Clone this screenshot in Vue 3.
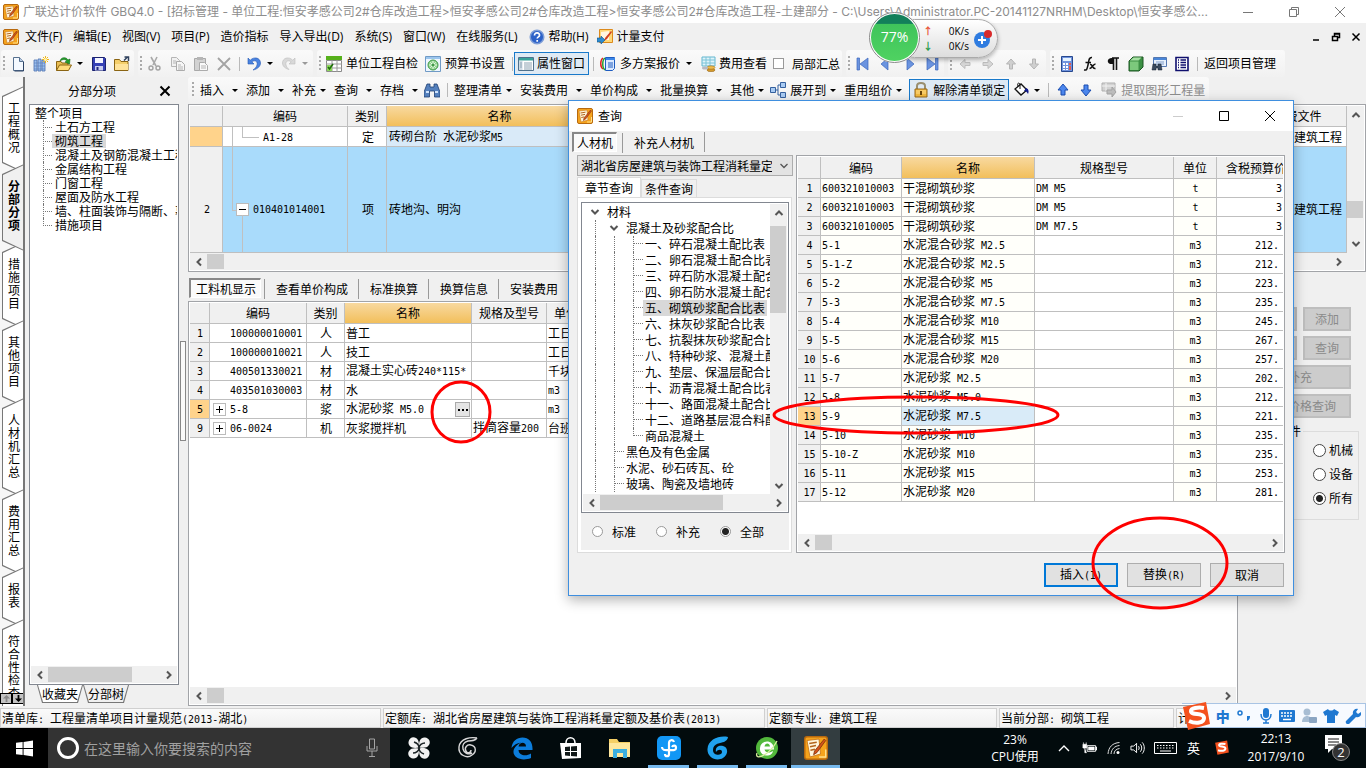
<script setup>
import { h, ref } from 'vue'

const icons = {
  app: '<rect x=".5" y=".5" width="15" height="15" rx="1.500" fill="#f5a31c" stroke="#b8690e"/><path d="M2 3l8-1 1 10-7 2z" fill="#fff6dc" stroke="#c9781c" stroke-width=".6"/><path d="M3.500 5l5-.8M4 7.200l4-.8M4.300 9.500l3-.6" stroke="#b3651c" stroke-width="1"/><path d="M13.500 2L7 10l-.6 2.500L8.700 11l5.800-8z" fill="#d2541a" stroke="#7a2c0a" stroke-width=".5"/><path d="M10 14h4.500V9" stroke="#ffe08a" fill="none"/>',
  newfile: '<path d="M3.500 1.500h6l4 4v9h-10z" fill="#f4f9ff" stroke="#56708f"/><path d="M9.500 1.500v4h4" fill="#b9cce4" stroke="#56708f"/><path d="M13.500 6v9h-9" stroke="#2c4364" fill="none"/>',
  newbook: '<path d="M1 4h3v11H1zM5 3h3v12H5zM9 4h3v11H9z" fill="#9dc0ee" stroke="#4a6fae" stroke-width=".8"/><path d="M1 7h11M1 10h11M1 13h11" stroke="#5d83bd" stroke-width=".7"/><path d="M12.500 0v7M9 3.500h7M10 1l5 5M15 1l-5 5" stroke="#f1b619"/><circle cx="12.500" cy="3.500" r="1.500" fill="#fff3b0"/>',
  open: '<path d="M.5 14.500V5.500H5l1 1.500h6v2" fill="#e9bd52" stroke="#8a6413"/><path d="M.5 14.500L3.500 9h12l-3 5.500z" fill="#ffdb7a" stroke="#8a6413"/><path d="M4 5c1-4 6-4.500 8-1l2-1-.5 5L9 6l1.800-1C9.500 3 7 3 4 5z" fill="#23a129" stroke="#0d6615" stroke-width=".6"/>',
  save: '<path d="M1.500 1.500h12l1 1v12h-13z" fill="#3540b5" stroke="#1b226e"/><path d="M4 2h8v5H4z" fill="#f4f5ff"/><path d="M4 10h8v4.500H4z" fill="#c8cdf0"/><path d="M5.500 11h2v3h-2z" fill="#20277c"/>',
  folder: '<path d="M.5 14.500V3.500h5l1.500 2h7v9z" fill="#f5cf6b" stroke="#8a6413"/><path d="M1 14V8h13v6z" fill="#ffe39a"/><path d="M10 4.500l3.500-3.500M10.500 1h4v4" stroke="#30425e" stroke-width="1.500" fill="none"/>',
  cut: '<path d="M4 1l5 9M10 1L6 9" stroke="#a9a9a9" stroke-width="1.600" fill="none"/><circle cx="4" cy="12" r="2" fill="none" stroke="#a3a3a3" stroke-width="1.400"/><circle cx="11" cy="12" r="2" fill="none" stroke="#a3a3a3" stroke-width="1.400"/>',
  copy: '<path d="M1.500 1.500h5l3 3v6h-8z" fill="#f1f1f1" stroke="#b5b5b5"/><path d="M6.500 5.500h5l3 3v6h-8z" fill="#f6f6f6" stroke="#ababab"/><path d="M8 9h3M8 11h5M8 13h5M3 5h3M3 7h3" stroke="#b5b5b5"/>',
  paste: '<path d="M1.500 2.500h11v12h-11z" fill="#d2d2d2" stroke="#a9a9a9"/><path d="M4 1h6v3H4z" fill="#b5b5b5"/><path d="M6.500 6.500h5l3 3v5h-8z" fill="#fafafa" stroke="#ababab"/><path d="M8 10h5M8 12h5" stroke="#b5b5b5"/>',
  del: '<path d="M2 2l12 12M14 2L2 14" stroke="#a3a3a3" stroke-width="1.800"/>',
  undo: '<path d="M2 2v6h6L5.800 5.800C9 3.500 12 5.500 11 9c-.5 2-2 3.500-4 5 5-1 7.500-4 7.500-7C14.500 2 8.500 0 4.200 4.200z" fill="#4a83e0" stroke="#2457b3" stroke-width=".6"/>',
  redo: '<path d="M14 2v6H8l2.200-2.200C7 3.500 4 5.500 5 9c.5 2 1.500 3 3 4.500C4 12.500 1.500 10 1.500 7 1.500 2 7.500 0 11.800 4.200z" fill="#d9d9d9" stroke="#bcbcbc" stroke-width=".6"/>',
  check: '<path d="M0 0h16v4H0z" fill="#57b11c"/><path d="M.5 4.500h15v11H.5z" fill="#fff" stroke="#8b8b8b"/><path d="M0 8h16M0 12h16M6 4v12M11 4v12" stroke="#9a9a9a"/><path d="M1 9h5v6H1z" fill="#8ed85b"/><path d="M2 11l1.500 2L7 8" stroke="#1f6e0c" stroke-width="1.600" fill="none"/>',
  budget: '<path d="M.5.500h15v15H.5z" fill="#eef6ff" stroke="#6f9ac6"/><path d="M1 1h14v2H1z" fill="#9cc6ee"/><circle cx="8" cy="9" r="5" fill="#8fd08d" stroke="#3f9a47"/><path d="M8 5v8M4 9h8M5.300 6.300l5.400 5.400M10.700 6.300l-5.400 5.400" stroke="#eafbe8"/><circle cx="8" cy="9" r="1.500" fill="#3f9a47"/>',
  props: '<path d="M.5 1.500h15v13H.5z" fill="#fff" stroke="#50718c"/><path d="M1 2h14v2.500H1z" fill="#39a29a"/><path d="M1 5h3.500v9H1z" fill="#cfdbe5"/><path d="M6 7h8M6 9h8M6 11h8M6 13h8M2 7h2M2 9h2M2 11h2" stroke="#8ba1b1"/>',
  plans: '<path d="M3 2C0 4 0 11 3 13" stroke="#e02020" stroke-width="1.500" fill="none"/><path d="M5 2C2 4 2 12 5 14" stroke="#27a12c" stroke-width="1.500" fill="none"/><path d="M5.500 1.500h9v11l-2 2h-7z" fill="#dbe9ff" stroke="#1e5cc0"/><path d="M6 3h9" stroke="#3a86e8" stroke-width="2"/><path d="M8 7h5M8 9h5M8 11h5" stroke="#1e5cc0"/>',
  fee: '<path d="M1 1h13v9H1z" fill="#dff3fa" stroke="#63b7cf"/><path d="M1 4h13M1 7h13M5 1v9M9 1v9" stroke="#7cc4d8"/><ellipse cx="10" cy="14" rx="4" ry="1.700" fill="#d49a2c" stroke="#8e5d10" stroke-width=".5"/><ellipse cx="10" cy="11.500" rx="4" ry="1.700" fill="#f0bd4e" stroke="#8e5d10" stroke-width=".5"/><ellipse cx="4" cy="12" rx="3" ry="1.500" fill="#b9b9c0"/>',
  first: '<path d="M2 2h2.500v12H2zM13 2v12L5 8z" fill="#6b94e0" stroke="#3b66bb" stroke-width=".7"/>',
  prev: '<path d="M10 2v12L3 8z" fill="#6b94e0" stroke="#3b66bb" stroke-width=".7"/>',
  next: '<path d="M6 2v12l7-6z" fill="#6b94e0" stroke="#3b66bb" stroke-width=".7"/>',
  last: '<path d="M11.500 2H14v12h-2.500zM3 2v12l8-6z" fill="#6b94e0" stroke="#3b66bb" stroke-width=".7"/>',
  gl: '<path d="M3 8l5-4.500v3h5v3H8v3z" fill="#d7d7d7" stroke="#bdbdbd"/>',
  gr: '<path d="M13 8L8 3.500v3H3v3h5v3z" fill="#d7d7d7" stroke="#bdbdbd"/>',
  gu: '<path d="M8 3l4.500 5h-3v5h-3V8h-3z" fill="#cfcfcf" stroke="#b5b5b5"/>',
  gd: '<path d="M8 13l4.500-5h-3V3h-3v5h-3z" fill="#cfcfcf" stroke="#b5b5b5"/>',
  calc: '<path d="M2.500.500h11v15h-11z" fill="#6f93dd" stroke="#27488f"/><path d="M4 2h8v3H4z" fill="#e6f3ff"/><path d="M4 7h2v2H4zM7 7h2v2H7zM4 10h2v2H4zM7 10h2v2H7zM4 13h2v1H4zM7 13h2v1H7z" fill="#fff"/><path d="M10 7h2v2h-2zM10 10h2v4h-2z" fill="#e45c4d"/>',
  fx: '<path d="M10 1.500C6.500 1 7 5 6 9s-1 5.500-4 5M3.500 6.500H9M8 8.500c3-1 2 5 5.500 4M13.500 8C11 8 10 12.500 7.500 12.500" stroke="#111" stroke-width="1.500" fill="none"/>',
  para: '<path d="M7 2h7M8.500 2v12M11.500 2v12" stroke="#111" stroke-width="1.600"/><path d="M8 2C1 1 1 9 8 8z" fill="#111"/>',
  cube: '<path d="M1 5l4-4h10v10l-4 4H1z" fill="#3c9044" stroke="#1c5623"/><path d="M2 5.500h8.500v8.500H2z" fill="#7cc97c"/><path d="M2 4.500l3.500-3h8l-3 3z" fill="#a5e0a2"/>',
  find: '<path d="M2.500 1.500h13v9h-13z" fill="#e8f1fc" stroke="#5478b1"/><path d="M3 2h12v2H3z" fill="#4a86d8"/><path d="M5 6h8M5 8h8" stroke="#7e9cc8"/><path d="M2 8h3v2h2V8h3l1 6H7v-2H5v2H1z" fill="#39495c" stroke="#162130" stroke-width=".5"/>',
  list: '<path d="M2 1.500h12v13H2z" fill="#fff" stroke="#10106e" stroke-width="1.600"/><path d="M4 4h1M6.500 4H12M4 6.500h1M6.500 6.500H12M4 9h1M6.500 9H12M4 11.500h1M6.500 11.500H12" stroke="#10106e" stroke-width="1.300"/>',
  bino: '<path d="M3 2h3v3h4V2h3l3 8v5h-5.500V9h-5v6H0v-5z" fill="#5480bd" stroke="#1f3f72" stroke-width=".8"/><path d="M2 10h3M11 10h3" stroke="#cfe2fa" stroke-width="2"/>',
  expand: '<path d="M.5 5.500h5v5h-5zM10.500.500h5v5h-5zM10.500 10.500h5v5h-5z" fill="#a9cbf3" stroke="#35619f"/><path d="M5.500 8H8M10.500 3H8v10h2.500" stroke="#35619f" fill="none"/>',
  lock: '<path d="M4 7V4c0-4 8-4 8 0v3" stroke="#9a8f70" stroke-width="2" fill="none"/><path d="M2 7h12v8H2z" fill="#f2b93e" stroke="#96681a"/><path d="M3 9h10M3 11h10" stroke="#ffdf8e"/><path d="M7 9h2v4H7z" fill="#6b460a"/>',
  bucket: '<path d="M2 7l6-5 6 6-6 5z" fill="#fff" stroke="#111" stroke-width="1.300"/><path d="M7 7V2C5 0 4 2 5 4" stroke="#111" fill="none"/><path d="M13 6c3 1 3 4 2 6-1-2-2-3-4-3z" fill="#111a8c"/>',
  up: '<path d="M8 2l5 6h-3v5H6V8H3z" fill="#4c87ee" stroke="#1b4db0"/>',
  down: '<path d="M8 14l5-6h-3V3H6v5H3z" fill="#4c87ee" stroke="#1b4db0"/>',
  extract: '<path d="M1 1h13v8H1z" fill="#d2d2d2" stroke="#b0b0b0"/><path d="M1 4h13M5 1v8" stroke="#f1f1f1"/><path d="M6 8h5V5l4 5-4 5v-3H6z" fill="#bdbdbd" stroke="#a3a3a3"/>',
  help: '<circle cx="8" cy="8" r="6.800" fill="#2d62c8" stroke="#7e9ed7" stroke-width="1.500"/><path d="M5.500 6.500c0-4 5.500-3 5 0-.3 1.300-2.300 1.500-2.300 3M8.200 11v1.700" stroke="#fff" stroke-width="1.700" fill="none"/>',
  pay: '<path d="M2.500.500h13v13h-13z" fill="#ffd877" stroke="#dc8a1c"/><path d="M4 3l8-1v9H4z" fill="#fff5e0"/><path d="M14 2L8 9l-1 3 3-2 5-7z" fill="#cf3f22"/><path d="M0 9h4V7l4 4-4 4v-2H0z" fill="#2d8bd0" stroke="#125688" stroke-width=".6"/>'
}
const Icon = (p) => h('svg', { class: 'ic', viewBox: '0 0 16 16', innerHTML: icons[p.n] })
Icon.props = ['n']

// Latin runs are set in a narrow monospace face beside the full-width characters.
const T = (p) => h('span', { class: 'mix' }, String(p.s).split(/([\x20-\x7e]+)/).filter(Boolean)
  .map((x) => (/^[\x20-\x7e]/.test(x) ? h('span', { class: 'asc' }, x) : x)))
T.props = ['s']

const Chev = (p) => h('svg', { class: 'chev', viewBox: '0 0 10 10' }, [h('path', {
  d: { l: 'M7 1.500L3.500 5 7 8.500', r: 'M3 1.500L6.500 5 3 8.500', u: 'M1.500 7L5 3.500 8.500 7', d: 'M1.500 3L5 6.500 8.500 3' }[p.d]
})])
Chev.props = ['d']

const menus = ['文件(F)', '编辑(E)', '视图(V)', '项目(P)', '造价指标', '导入导出(D)', '系统(S)', '窗口(W)', '在线服务(L)']
const tools = [
  { t: '插入' }, { t: '添加' }, { t: '补充', near: 1 }, { t: '查询' }, { t: '存档' }, { icon: 'bino' }, { sep: 1 },
  { t: '整理清单', near: 1 }, { t: '安装费用' }, { t: '单价构成' }, { t: '批量换算' }, { t: '其他', near: 1 },
  { t: '展开到', pre: 'expand', near: 1 }, { t: '重用组价', near: 1 }
]
const vtabs = ['工程概况', '分部分项', '措施项目', '其他项目', '人材机汇总', '费用汇总', '报表', '符合性检查']
const sections = ['土石方工程', '砌筑工程', '混凝土及钢筋混凝土工程', '金属结构工程', '门窗工程', '屋面及防水工程', '墙、柱面装饰与隔断、幕墙工程', '措施项目']
const detailTabs = ['查看单价构成', '标准换算', '换算信息', '安装费用']
const resources = [
  ['1', '100000010001', '人', '普工', '', '工日'],
  ['2', '100000010021', '人', '技工', '', '工日'],
  ['3', '400501330021', '材', '混凝土实心砖240*115*', '', '千块'],
  ['4', '403501030003', '材', '水', '', 'm3'],
  ['5', '5-8', '浆', '水泥砂浆 M5.0', '', 'm3'],
  ['9', '06-0024', '机', '灰浆搅拌机', '拌筒容量200', '台班']
]
const tree = [
  { g: ['c'], t: '材料' }, { g: ['v', 'c'], t: '混凝土及砂浆配合比' },
  ...['一、碎石混凝土配比表', '二、卵石混凝土配合比表', '三、碎石防水混凝土配合比表', '四、卵石防水混凝土配合比表', '五、砌筑砂浆配合比表',
    '六、抹灰砂浆配合比表', '七、抗裂抹灰砂浆配合比表', '八、特种砂浆、混凝土配合比表', '九、垫层、保温层配合比表', '十、沥青混凝土配合比表',
    '十一、路面混凝土配合比表', '十二、道路基层混合料配合比表'].map((t, i) => ({ g: ['v', 'v', 'e'], t, sel: i === 4 })),
  { g: ['v', 'v', 'e last'], t: '商品混凝土' },
  { g: ['v', 'e'], t: '黑色及有色金属' }, { g: ['v', 'e'], t: '水泥、砂石砖瓦、砼' }, { g: ['v', 'e'], t: '玻璃、陶瓷及墙地砖' }
]
const materials = [
  ['600321010003', '干混砌筑砂浆', 'DM M5', 't', '3'], ['600321010003', '干混砌筑砂浆', 'DM M5', 't', '3'], ['600321010005', '干混砌筑砂浆', 'DM M7.5', 't', '3'],
  ['5-1', '水泥混合砂浆 M2.5', '', 'm3', '212.'], ['5-1-Z', '水泥混合砂浆 M2.5', '', 'm3', '212.'], ['5-2', '水泥混合砂浆 M5', '', 'm3', '223.'],
  ['5-3', '水泥混合砂浆 M7.5', '', 'm3', '235.'], ['5-4', '水泥混合砂浆 M10', '', 'm3', '245.'], ['5-5', '水泥混合砂浆 M15', '', 'm3', '267.'],
  ['5-6', '水泥混合砂浆 M20', '', 'm3', '257.'], ['5-7', '水泥砂浆 M2.5', '', 'm3', '202.'], ['5-8', '水泥砂浆 M5.0', '', 'm3', '212.'],
  ['5-9', '水泥砂浆 M7.5', '', 'm3', '221.'], ['5-10', '水泥砂浆 M10', '', 'm3', '235.'], ['5-10-Z', '水泥砂浆 M10', '', 'm3', '235.'],
  ['5-11', '水泥砂浆 M15', '', 'm3', '253.'], ['5-12', '水泥砂浆 M20', '', 'm3', '281.']
]
const scope = ref('全部')
const kind = ref('所有')
const partial = ref(false)
</script>

<template>
  <div class="app">
    <header class="title">
      <Icon n="app" />
      <h1>广联达计价软件 GBQ4.0 - [招标管理 - 单位工程:恒安孝感公司2#仓库改造工程&gt;恒安孝感公司2#仓库改造工程&gt;恒安孝感公司2#仓库改造工程-土建部分 - C:\Users\Administrator.PC-20141127NRHM\Desktop\恒安孝感公...</h1>
      <div class="winbtns">
        <button aria-label="最小化"><svg viewBox="0 0 12 12"><path d="M1 6.500h10" /></svg></button>
        <button aria-label="还原"><svg viewBox="0 0 12 12"><path d="M1.500 3.500h7v7h-7zM3.500 3.500v-2h7v7h-2" /></svg></button>
        <button aria-label="关闭"><svg viewBox="0 0 12 12"><path d="M1 1l10 10M11 1L1 11" /></svg></button>
      </div>
    </header>

    <nav class="menu">
      <Icon n="app" />
      <button v-for="m in menus" :key="m">{{ m }}</button>
      <button class="withicon"><Icon n="help" />帮助(H)</button>
      <button class="withicon"><Icon n="pay" />计量支付</button>
      <div class="mdi">
        <button aria-label="最小化"><svg viewBox="0 0 10 10"><path d="M2 8h6" /></svg></button>
        <button aria-label="还原"><svg viewBox="0 0 10 10"><path d="M1.500 4.500h5v4h-5zM3.500 4V1.500h5v4H7M3 2h6" /></svg></button>
        <button aria-label="关闭"><svg viewBox="0 0 10 10"><path d="M1.500 1.500l7 7M8.500 1.500l-7 7" /></svg></button>
      </div>
    </nav>

    <div class="bars">
      <div class="group"><i class="grip"></i>
        <button class="tb" aria-label="新建"><Icon n="newfile" /></button><button class="tb" aria-label="新建项目"><Icon n="newbook" /></button>
        <button class="tb drop" aria-label="打开"><Icon n="open" /><i class="tri"></i></button><button class="tb" aria-label="保存"><Icon n="save" /></button>
        <button class="tb" aria-label="另存"><Icon n="folder" /></button></div>
      <div class="group"><i class="grip"></i>
        <button class="tb" aria-label="剪切"><Icon n="cut" /></button><button class="tb" aria-label="复制"><Icon n="copy" /></button>
        <button class="tb" aria-label="粘贴"><Icon n="paste" /></button><button class="tb" aria-label="删除"><Icon n="del" /></button><i class="sep"></i>
        <button class="tb drop" aria-label="撤销"><Icon n="undo" /><i class="tri"></i></button>
        <button class="tb drop" aria-label="重做"><Icon n="redo" /><i class="tri dim"></i></button></div>
      <div class="group"><i class="grip"></i>
        <button class="tx"><Icon n="check" />单位工程自检</button>
        <button class="tx"><Icon n="budget" />预算书设置</button><i class="sep"></i>
        <button class="tx on"><Icon n="props" />属性窗口</button><i class="sep"></i>
        <button class="tx"><Icon n="plans" />多方案报价<i class="tri"></i></button>
        <button class="tx fee"><Icon n="fee" />费用查看</button>
        <label class="chk"><input v-model="partial" type="checkbox">局部汇总</label></div>
      <div class="group"><i class="grip"></i>
        <button v-for="n in ['first', 'prev', 'next', 'last']" :key="n" class="tb" :aria-label="n"><Icon :n="n" /></button></div>
      <div class="group"><i class="grip"></i>
        <button v-for="n in ['gl', 'gr', 'gu', 'gd']" :key="n" class="tb" :aria-label="n"><Icon :n="n" /></button></div>
      <div class="group end"><i class="grip"></i>
        <button v-for="n in ['calc', 'fx', 'para', 'cube', 'find', 'list']" :key="n" class="tb" :aria-label="n"><Icon :n="n" /></button>
        <i class="sep"></i><button class="tx">返回项目管理</button></div>
    </div>

    <main class="body">
      <nav class="vtabs">
        <button v-for="(v, i) in vtabs" :key="v" :class="{ active: i === 1 }"><span>{{ v }}</span></button>
        <div class="vspin"><button aria-label="上移" class="off"><svg viewBox="0 0 10 10"><path d="M5 1l4 4H6v4H4V5H1z" /></svg></button><button aria-label="下移"><svg viewBox="0 0 10 10"><path d="M5 9l4-4H6V1H4v4H1z" /></svg></button></div>
      </nav>

      <aside class="side">
        <header><h2>分部分项</h2><button aria-label="关闭"><svg viewBox="0 0 12 12"><path d="M1.500 1.500l9 9M10.500 1.500l-9 9" /></svg></button></header>
        <div class="box">
          <div class="sections">
            <p>整个项目</p>
            <ul><li v-for="(s, i) in sections" :key="s"><span :class="{ sel: i === 1 }">{{ s }}</span></li></ul>
          </div>
          <div class="hs"><button aria-label="左"><Chev d="l" /></button><i class="thumb wide"></i><button aria-label="右"><Chev d="r" /></button></div>
        </div>
        <div class="foot"><button class="cur">收藏夹</button><button>分部树</button></div>
      </aside>
      <div class="split"><i></i></div>

      <section class="work">
        <div class="bars second">
          <div class="group"><i class="grip"></i>
            <template v-for="(x, i) in tools" :key="i">
              <i v-if="x.sep" class="sep"></i>
              <button v-else-if="x.icon" class="tb seek" aria-label="查找"><Icon :n="x.icon" /></button>
              <button v-else class="dd" :class="{ near: x.near }"><Icon v-if="x.pre" :n="x.pre" />{{ x.t }}<i class="tri"></i></button>
            </template>
            <i class="sep"></i>
            <button class="tx on"><Icon n="lock" />解除清单锁定</button>
            <button class="tb drop" aria-label="填充"><Icon n="bucket" /><i class="tri"></i></button><i class="sep"></i>
            <button class="tb" aria-label="上移"><Icon n="up" /></button><button class="tb" aria-label="下移"><Icon n="down" /></button>
            <button class="tx gray"><Icon n="extract" />提取图形工程量</button>
          </div>
        </div>

        <div class="grid top">
          <div class="main">
            <table>
              <colgroup><col class="w33"><col class="w125"><col class="w39"><col class="w226"><col><col class="w98"></colgroup>
              <thead><tr><th></th><th>编码</th><th>类别</th><th class="hot">名称</th><th></th><th>取费文件</th></tr></thead>
              <tbody>
                <tr><td class="num hot2"></td><td class="code a"><T s="A1-28" /></td><td class="c">定</td><td class="pale"><T s="砖砌台阶 水泥砂浆M5" /></td><td></td><td class="r">建筑工程</td></tr>
                <tr class="big"><td class="num"><T s="2" /></td><td class="code b"><i class="pm minus"></i><T s="010401014001" /></td><td class="c">项</td><td>砖地沟、明沟</td><td></td><td class="r">建筑工程</td></tr>
              </tbody>
            </table>
            <div class="hs"><button aria-label="左"><Chev d="l" /></button><i class="thumb"></i><button aria-label="右"><Chev d="r" /></button></div>
          </div>
          <div class="vs"><button aria-label="上"><Chev d="u" /></button><i class="thumb"></i><button aria-label="下"><Chev d="d" /></button></div>
        </div>

        <div class="lower">
          <div class="detail">
            <div class="dtabs"><button class="press">工料机显示</button><button v-for="d in detailTabs" :key="d">{{ d }}</button></div>
            <div class="grid bottom">
              <table>
                <colgroup><col class="w20"><col class="w97"><col class="w38"><col class="w127"><col class="w75"><col class="w39"><col></colgroup>
                <thead><tr><th></th><th>编码</th><th>类别</th><th class="hot">名称</th><th>规格及型号</th><th>单位</th><th></th></tr></thead>
                <tbody>
                  <tr v-for="r in resources" :key="r[0]">
                    <td class="num" :class="{ hot2: r[0] === '5' }"><T :s="r[0]" /></td>
                    <td class="rc"><i v-if="r[1].length < 9" class="pm"></i><T :s="r[1]" /></td>
                    <td class="c">{{ r[2] }}</td>
                    <td class="nm"><T :s="r[3]" /><button v-if="r[0] === '5'" class="more" aria-label="更多"><svg viewBox="0 0 13 13"><path d="M2 6h2v2H2zM6 6h2v2H6zM10 6h2v2h-2z" /></svg></button></td>
                    <td><T :s="r[4]" /></td><td><T :s="r[5]" /></td><td></td>
                  </tr>
                </tbody>
              </table>
              <div class="hs"><button aria-label="左"><Chev d="l" /></button><i class="thumb"></i><button aria-label="右"><Chev d="r" /></button></div>
            </div>
          </div>
          <aside class="ops">
            <div class="pair"><button>删除</button><button>添加</button></div>
            <div class="pair"><button>保存</button><button>查询</button></div>
            <button>补充</button>
            <button>信息价格查询</button>
            <fieldset><legend>过滤条件</legend>
              <label v-for="k in ['机械', '设备', '所有']" :key="k"><input v-model="kind" type="radio" name="kind" :value="k">{{ k }}</label>
            </fieldset>
          </aside>
        </div>
      </section>
    </main>

    <footer class="status">
      <span><T s="清单库: 工程量清单项目计量规范(2013-湖北)" /></span>
      <span><T s="定额库: 湖北省房屋建筑与装饰工程消耗量定额及基价表(2013)" /></span>
      <span><T s="定额专业: 建筑工程" /></span>
      <span><T s="当前分部: 砌筑工程" /></span>
      <span>计税模式</span>
    </footer>

    <footer class="task">
      <button class="start" aria-label="开始"><svg viewBox="0 0 18 18"><path d="M0 3l7-1v6.500H0zM8 2l10-1.500v8H8zM0 9.500h7V16l-7-1zM8 9.500h10v8L8 16z" fill="#fff" /></svg></button>
      <label class="search"><svg viewBox="0 0 24 24" class="ring"><circle cx="12" cy="12" r="9.500" fill="none" stroke="#fff" stroke-width="3" /></svg>
        <input type="text" placeholder="在这里输入你要搜索的内容" aria-label="搜索">
        <svg viewBox="0 0 12 20" class="mic"><path d="M3.500 1h5v10h-5zM1 8v5h10V8M6 13v5M3 18.500h6" fill="none" stroke="#a5a5a5" /></svg></label>
      <div class="apps">
        <button aria-label="风车"><svg viewBox="0 0 24 24" fill="#f2f2f2"><path d="M11.500 11.500C5 13 1 10 1.500 6 2 2 6 0 9 2c3 2 3 5 2.500 9.500z" /><path d="M12.500 11.500C11 5 14 1 18 1.500 22 2 24 6 22 9c-2 3-5 3-9.500 2.500z" /><path d="M12.500 12.500C19 11 23 14 22.500 18 22 22 18 24 15 22c-3-2-3-5-2.500-9.500z" /><path d="M11.500 12.500C13 19 10 23 6 22.500 2 22 0 18 2 15c2-3 5-3 9.500-2.500z" /><path d="M7 6c3 1 5 3 5 6 0-3 3-5 6-5M17 18c-3-1-5-3-5-6 0 3-3 5-6 5" stroke="#1a2224" stroke-width="1.500" fill="none" /></svg></button>
        <button aria-label="旋风"><svg viewBox="0 0 24 24" fill="none" stroke="#d9d9d9" stroke-width="1.400"><path d="M21 2c-6-1-17 0-18 9-1 8 8 12 13 8 5-3 4-9-1-10-4-1-7 3-5 6 1 3 5 2 5-1M21 2c-2 3-5 3-9 3-4 1-6 4-5 8 1 4 5 6 9 4" /></svg></button>
        <button aria-label="浏览器"><svg viewBox="0 0 24 24"><path d="M1.500 12C2 5 7 1.500 12.500 1.500 19 1.500 23 6 22.500 14H8.500c.5 6 8 6.500 12.500 3.500V22C11 26 1 21 4 13c1.500-3 4-5 7-6.500-4 .5-7 2.500-9.500 5.500zM8.500 10.500h7.500c0-5-6.500-5-7.500 0z" fill="#0c7ddb" /></svg></button>
        <button aria-label="商店"><svg viewBox="0 0 24 24"><path d="M1 7h21v15L3 23z" fill="#fff" /><path d="M7 7c0-7 9-7 9 0" fill="none" stroke="#fff" stroke-width="1.600" /><path d="M6 11l5-.5V15H6zM12 10.500l6-.5v5h-6zM6 16h5v4l-5-.5zM12 16h6v4.500l-6-.5z" fill="#101818" /></svg></button>
        <button aria-label="文件夹"><svg viewBox="0 0 24 24"><path d="M1 3h8l2 3h11v15H1z" fill="#f5cf65" /><path d="M1 7h21v14H1z" fill="#ffe79d" /><path d="M5 22v-9h14v9h-4v-5H9v5z" fill="#3aaee0" /></svg></button>
        <button aria-label="云" class="run"><svg viewBox="0 0 24 24"><rect width="24" height="24" rx="5" fill="#1297f5" /><path d="M17 6c-1-3-5-2-5 1v11c0 3-4 3-4 0M5 11c0 4 4 3 7 3s7 1 7-2-3-3-4-1" fill="none" stroke="#fff" stroke-width="2.200" /></svg></button>
        <button aria-label="广联达" class="run"><svg viewBox="0 0 24 24"><path d="M22 1C14-1 2 3 1.500 13 1 21 10 26 17 22c6-4 5-11 0-12-5-1-8 2-7 6 2-3 6-3 6 0 0 4-9 4-9-2 0-7 8-7 11-8 2-1 4-3 4-5z" fill="#20a2ef" /></svg></button>
        <button aria-label="360" class="run"><svg viewBox="0 0 24 24"><circle cx="12" cy="12" r="11" fill="#52b83c" /><path d="M5 12c1-9 14-9 14 1.500H9.500c1 4 6 3.500 8.500 1.500-1 7-14 6-13-3zM9.500 10.500H15c-.5-4-5-4-5.500 0z" fill="#fff" /><path d="M2 17C-1 25 14 20 22 5" stroke="#d6f09c" fill="none" stroke-width="1.300" /></svg></button>
        <button aria-label="GBQ" class="run cur"><Icon n="app" /></button>
      </div>
      <div class="tray">
        <div class="cpu">23%<br>CPU使用</div>
        <svg viewBox="0 0 12 8" class="t1"><path d="M1 7l5-5 5 5" fill="none" stroke="#fff" stroke-width="1.400" /></svg>
        <svg viewBox="0 0 16 12" class="t2"><path d="M5.500 3.500h9v6h-9z" fill="none" stroke="#fff" /><path d="M7 5h6v3H7zM1 2h4v4H1zM1.500 0v2M4.500 0v2M3 6v5h2M15 5h1v3h-1" fill="#fff" stroke="#fff" stroke-width=".7" /></svg>
        <svg viewBox="0 0 14 14" class="t2"><path d="M1.500 13C2 6 6 2 13 1.500M4.500 13C5 8 8 5 13 4.500M7.500 13c0-3 2-5 5.500-5.500" fill="none" stroke="#ddd" /><circle cx="11.500" cy="11.500" r="1.500" fill="#fff" /></svg>
        <svg viewBox="0 0 16 14" class="t2"><path d="M1 5h3l3-3v10L4 9H1zM9 5c1 1 1 3 0 4M11 3c2 2 2 6 0 8M13 1c3 3 3 9 0 12" fill="none" stroke="#fff" /></svg>
        <svg viewBox="0 0 24 14" class="t3"><path d="M.5 1.500h22v11H.5z" fill="none" stroke="#fff" /><path d="M3 4.500h18M3 7h18" stroke="#fff" stroke-dasharray="1.500 1.500" /><path d="M6 10h11" stroke="#fff" /></svg>
        <span class="ying">英</span>
        <svg viewBox="0 0 28 28" class="sg"><path d="M2 5L23 1l3 21L6 26z" fill="#f4511e" /><path d="M20 7c-5-1-11-1-11 2 0 4 11 1 11 6 0 4-7 5-13 3" fill="none" stroke="#fff" stroke-width="3.500" /></svg>
        <div class="clock">22:13<br>2017/9/10</div>
        <svg viewBox="0 0 28 32" class="note"><path d="M2 3h17v14H9l-4 4v-4H2z" fill="#fff" /><path d="M5 7h11M5 10h11M5 13h8" stroke="#111" /><circle cx="18" cy="20" r="8.500" fill="#333" stroke="#888" /><text x="18" y="25" text-anchor="middle" fill="#fff" font-size="13">2</text></svg>
      </div>
    </footer>

    <div class="dialog" role="dialog" aria-label="查询">
      <header><Icon n="app" /><h2>查询</h2>
        <div class="winbtns">
          <button aria-label="最小化" class="off"><svg viewBox="0 0 12 12"><path d="M1 6.500h10" /></svg></button>
          <button aria-label="最大化"><svg viewBox="0 0 12 12"><path d="M1.500 1.500h9v9h-9z" /></svg></button>
          <button aria-label="关闭"><svg viewBox="0 0 12 12"><path d="M1 1l10 10M11 1L1 11" /></svg></button>
        </div></header>
      <div class="dtabs"><button class="press">人材机</button><button>补充人材机</button><i></i></div>
      <div class="panes">
        <div class="left">
          <div class="lib"><select aria-label="定额库"><option>湖北省房屋建筑与装饰工程消耗量定</option></select><Chev d="d" /></div>
          <div class="ltabs"><button class="cur">章节查询</button><button>条件查询</button></div>
          <div class="panel">
            <div class="tree">
              <div class="view">
                <ul><li v-for="n in tree" :key="n.t"><i v-for="(g, k) in n.g" :key="k" :class="g"><Chev v-if="g === 'c'" d="d" /></i><span :class="{ sel: n.sel }">{{ n.t }}</span></li></ul>
                <div class="vs"><button aria-label="上"><Chev d="u" /></button><i class="thumb"></i><button aria-label="下"><Chev d="d" /></button></div>
              </div>
              <div class="hs"><button aria-label="左"><Chev d="l" /></button><i class="thumb wide"></i><button aria-label="右"><Chev d="r" /></button></div>
            </div>
            <div class="scopes">
              <label v-for="s in ['标准', '补充', '全部']" :key="s"><input v-model="scope" type="radio" name="scope" :value="s">{{ s }}</label>
            </div>
          </div>
        </div>
        <div class="grid mats">
          <table>
            <colgroup><col class="w23"><col class="w81"><col class="w133"><col class="w139"><col class="w43"><col></colgroup>
            <thead><tr><th></th><th>编码</th><th class="hot">名称</th><th>规格型号</th><th>单位</th><th class="cut">含税预算价</th></tr></thead>
            <tbody>
              <tr v-for="(m, i) in materials" :key="i">
                <td class="num" :class="{ hot2: i === 12 }"><T :s="i + 1" /></td>
                <td class="iv"><T :s="m[0]" /></td><td class="iv" :class="{ pick: i === 12 }"><T :s="m[1]" /></td>
                <td><T :s="m[2]" /></td><td class="c iv"><T :s="m[3]" /></td><td class="price" :class="{ edge: m[4] === '3' }"><T :s="m[4]" /></td>
              </tr>
            </tbody>
          </table>
          <div class="hs"><button aria-label="左"><Chev d="l" /></button><i class="thumb"></i><button aria-label="右"><Chev d="r" /></button></div>
        </div>
      </div>
      <div class="acts"><button class="def"><T s="插入(I)" /></button><button><T s="替换(R)" /></button><button>取消</button></div>
    </div>

    <div class="float">
      <div class="pill">
        <div class="rates"><p><b class="red">↑</b>0K/s</p><p><b class="green">↓</b>0K/s</p></div>
        <svg viewBox="0 0 20 20"><circle cx="9" cy="11" r="8" fill="#2f7ce0" /><path d="M9 7v8M5 11h8" stroke="#fff" stroke-width="2" /><circle cx="15" cy="5" r="4" fill="#d9292b" /></svg>
      </div>
      <div class="ball">77%</div>
    </div>

    <div class="ime">
      <svg viewBox="0 0 28 28" class="logo"><path d="M1 5L24 0l4 22L6 28z" fill="#f4511e" /><path d="M22 6c-6-1-13 0-13 3 0 5 13 1 13 7 0 5-8 6-15 3" fill="none" stroke="#fff" stroke-width="4" /></svg>
      <b>中</b>
      <svg viewBox="0 0 16 16"><circle cx="4" cy="5" r="2" fill="none" stroke="#1f78d1" stroke-width="1.500" /><path d="M11 8h3c0 3-1 4-3 5z" fill="#1f78d1" /></svg>
      <svg viewBox="0 0 16 16"><rect x="5" y="0" width="6" height="10" rx="3" fill="#1f78d1" /><path d="M3 6c0 8 10 8 10 0M8 12v3M5 15h6" fill="none" stroke="#1f78d1" stroke-width="1.500" /></svg>
      <svg viewBox="0 0 16 16"><rect x="0" y="2" width="16" height="12" rx="1" fill="#1f78d1" /><path d="M2 5h12M2 8h12" stroke="#fff" stroke-width="1.500" stroke-dasharray="2 1" /><path d="M4 11.500h8" stroke="#fff" stroke-width="1.500" /></svg>
      <svg viewBox="0 0 16 16" fill="#a8bdd3"><circle cx="6" cy="4" r="3.500" /><path d="M1 14c0-8 10-8 10 0z" /><rect x="8" y="9" width="8" height="6" rx="1" fill="#8ba5c2" /></svg>
      <svg viewBox="0 0 16 16"><path d="M5 1c1 2 5 2 6 0l5 3-2 4-2-1v8H4V7L2 8 0 4z" fill="#1f78d1" /></svg>
      <svg viewBox="0 0 16 16"><path d="M1 13l7-7c-1-3 2-6 5-5l-2 3 2 2 3-2c1 4-2 6-5 5l-7 7c-2 1-4-1-3-3z" fill="#1f78d1" /></svg>
    </div>

    <svg class="marks" viewBox="0 0 1366 768" fill="none" stroke="#fe0000" stroke-width="3">
      <ellipse cx="461" cy="412" rx="29" ry="30" /><ellipse cx="916" cy="415" rx="142" ry="18" /><ellipse cx="1160" cy="563" rx="67" ry="45" />
    </svg>
  </div>
</template>

<style>
body { margin: 0; overflow: hidden; }
.ic { width: 16px; height: 16px; flex: none; display: block; }
.ic * { fill-rule: evenodd; }
.mix { white-space: pre; }
.asc { font-family: "DejaVu Sans Mono", monospace; font-size: 10px; }
.chev { width: 10px; height: 10px; flex: none; display: block; fill: none; stroke: #555; stroke-width: 2; }
</style>

<style scoped>
* { box-sizing: border-box; }
.app { position: relative; height: 100vh; overflow: hidden; display: flex; flex-direction: column; background: #f0f0f0; color: #000; font: 12px/14px "Open Sans", "Noto Sans CJK SC", sans-serif; }
button { font: inherit; color: inherit; padding: 0; border: 0; background: none; white-space: nowrap; flex: none; }
h1, h2, p, ul { margin: 0; padding: 0; font: inherit; list-style: none; }
i { font-style: normal; }
.title { height: 23px; flex: none; background: #fff; display: flex; align-items: center; padding: 0 3px; gap: 4px; color: #8d8d8d; }
.title h1 { flex: 1; overflow: hidden; white-space: nowrap; font-family: Inter, "Noto Sans CJK SC", sans-serif; }
.winbtns { display: flex; }
.winbtns button { width: 46px; height: 20px; display: grid; place-items: center; }
.winbtns svg { width: 12px; height: 12px; fill: none; stroke: #777; }
.menu { height: 27px; flex: none; display: flex; align-items: center; padding-left: 3px; gap: 11px; }
.menu .ic { margin-right: -5px; }
.menu .withicon { display: flex; align-items: center; gap: 9px; margin-right: -3px; }
.mdi { margin-left: auto; display: flex; gap: 10px; padding-right: 5px; }
.mdi svg { width: 10px; height: 10px; display: block; fill: none; stroke: #000; stroke-width: 1.5; }
.bars { height: 27px; flex: none; display: flex; gap: 4px; padding-left: 1px; }
.group { display: flex; align-items: center; background: linear-gradient(#fafafa, #f1f1f1); padding: 0 2px; border-radius: 3px; }
.grip { width: 2px; height: 16px; margin-right: 5px; background: repeating-linear-gradient(#aaa 0 2px, transparent 2px 4px); }
.tb { width: 23px; height: 22px; display: flex; align-items: center; }
.tb.drop { width: 35px; gap: 5px; }
.tb:last-child { margin-right: -5px; }
.tri { display: inline-block; width: 0; height: 0; border: 3px solid transparent; border-top-color: #000; border-bottom: 0; flex: none; }
.tri.dim { border-top-color: #999; }
.sep { width: 1px; height: 14px; background: #b9b9b9; margin: 0 6px 0 0; }
.tx { display: flex; align-items: center; height: 23px; gap: 4px; margin-right: 7px; }
.tx .tri { margin-left: 2px; }
.tx.on { border: 1px solid #1979ca; background: #dfeaf4; padding: 0 3px; margin: 0 4px 0 -5px; gap: 3px; }
.tx.gray { color: #8d8d8d; margin-right: 2px; }
.tx.fee { margin-left: 2px; gap: 2px; margin-right: 6px; }
.chk { display: flex; align-items: center; gap: 8px; font-family: "Noto Sans CJK SC", sans-serif; }
.chk input { appearance: none; width: 11px; height: 11px; margin: 0; border: 1px solid #999; background: #fff; }
.dd { display: flex; align-items: center; height: 23px; padding-right: 8px; }
.dd .ic { margin: 0 4px 0 -2px; }
.dd .tri { margin-left: 8px; }
.dd.near .tri { margin-left: 4px; }
.bars.second { padding: 0 0 1px; height: 27px; }
.second .grip { margin: 0 6px 0 2px; }
.second .seek { margin-left: -2px; }
.second .tx.on { gap: 4px; margin-left: -8px; }
.body { flex: 1; min-height: 0; display: flex; font-family: "Noto Sans CJK SC", sans-serif; }

.vtabs { position: relative; width: 25px; flex: none; overflow: hidden; padding: 9px 0 0 2px; background: #f6f6f6; border-right: 2px solid #777; }
.vtabs > button { position: relative; display: block; width: 22px; padding: 15px 5px 20px 6px; margin-bottom: -9px; line-height: 13px; white-space: normal; }
.vtabs > button span { position: relative; z-index: 1; display: block; width: 12px; overflow-wrap: anywhere; word-break: break-all; }
.vtabs > button::before, .vtabs > button::after { content: ""; position: absolute; inset: 0; background: #777; clip-path: polygon(0 10px, 100% 0, 100% 100%, 0 calc(100% - 10px)); }
.vtabs > button::after { inset: 1px 0 1px 1px; background: #fff; }
.vtabs > .active { z-index: 2; font-weight: bold; }
.vtabs > .active::after { background: #f0f0f0; }
.vspin { position: absolute; left: 0; bottom: 2px; z-index: 3; display: flex; }
.vspin button { width: 12px; height: 11px; border: 1px solid #000; background: #c3c3c3; display: grid; place-items: center; }
.vspin svg { width: 9px; height: 9px; }
.vspin .off { fill: #888; }

.side { width: 155px; flex: none; display: flex; flex-direction: column; padding-left: 4px; }
.side header { height: 27px; display: flex; align-items: center; padding: 0 9px 0 39px; }
.side h2 { flex: 1; }
.side header svg { width: 12px; height: 12px; display: block; stroke: #000; stroke-width: 2; }
.box { flex: 1; min-height: 0; width: 150px; border: 1px solid #828790; background: #fff; padding: 1px; display: flex; flex-direction: column; }
.sections { flex: 1; overflow: hidden; line-height: 14px; padding-left: 4px; white-space: nowrap; }
.sections ul { padding-left: 8px; }
.sections li { display: flex; position: relative; padding-left: 9px; }
.sections li::before { content: ""; position: absolute; left: 0; top: 0; width: 8px; height: 7px; border: dotted #777; border-width: 0 0 1px 1px; }
.sections li:not(:last-child)::after { content: ""; position: absolute; left: 0; top: 7px; height: 7px; border-left: 1px dotted #777; }
.sections li span { padding: 0 3px; }
.sel { background: #d8d8d8; }
.foot { height: 21px; flex: none; display: flex; padding: 0 0 3px 8px; }
.foot button { position: relative; width: 46px; z-index: 0; }
.foot button::before, .foot button::after { content: ""; position: absolute; inset: 0; z-index: -2; background: #777; clip-path: polygon(0 0, 100% 0, calc(100% - 5px) 100%, 5px 100%); }
.foot button::after { inset: 0 1px 1px; z-index: -1; background: #fff; }
.foot button:last-child::after { background: #f0f0f0; }
.split { width: 8px; flex: none; padding-top: 264px; }
.split i { display: block; width: 6px; height: 100px; border: 1px solid #888; background: #fafafa; }

.work { flex: 1; min-width: 0; display: flex; flex-direction: column; }
.hs { height: 17px; flex: none; display: flex; background: #f0f0f0; }
.hs button { width: 17px; display: grid; place-items: center; }
.hs button:last-child { margin-left: auto; }
.hs .thumb { width: 17px; margin: 1px 0; background: #cdcdcd; }
.vs { width: 17px; flex: none; display: flex; flex-direction: column; background: #f0f0f0; }
.vs button { height: 17px; display: grid; place-items: center; }
.vs button:last-child { margin-top: auto; }
.vs .thumb { width: 16px; background: #cdcdcd; }
.grid { border: 1px solid #a2a4a8; background: #fff; padding: 1px; overflow: hidden; display: flex; flex-direction: column; }
.grid table { width: 100%; table-layout: fixed; border-collapse: separate; border-spacing: 0; }
th { height: 21px; padding: 0; font-weight: normal; background: #f0f0f0; border: solid #bfbfbf; border-width: 0 1px 1px 0; overflow: hidden; white-space: nowrap; }
td { height: 19px; padding: 0 0 0 1px; line-height: 16px; border: solid #bfbfbf; border-width: 0 1px 1px 0; overflow: hidden; white-space: nowrap; }
th.hot { background: linear-gradient(#f8d9a0, #f2bf5b); }
.num { text-align: center; background: #f0f0f0; }
.hot2 { background: #ffd38b; }
.c { text-align: center; }
.r { text-align: right; padding-right: 4px; }
.pale { background: #d9eaf8; }
.iv { background: #fffffa; }
.pick { background: #d9ebf8; }
.w20 { width: 20px; } .w23 { width: 23px; } .w33 { width: 33px; } .w38 { width: 38px; } .w39 { width: 39px; } .w43 { width: 43px; }
.w75 { width: 75px; } .w81 { width: 81px; } .w97 { width: 97px; } .w98 { width: 98px; } .w125 { width: 125px; } .w127 { width: 127px; }
.w133 { width: 133px; } .w139 { width: 139px; } .w226 { width: 226px; }
.top { flex: none; flex-direction: row; height: 168px; }
.top .main { flex: 1; min-width: 0; }
.top td { height: 20px; padding-left: 2px; }
.top .big td { height: 106px; background: #a9dbfb; }
.top .big .num { background: #f0f0f0; }
.top .code { position: relative; padding-left: 40px; }
.a::before { content: ""; position: absolute; left: 9px; top: 0; bottom: 0; border-left: 1px solid #c0c0c0; }
.a::after { content: ""; position: absolute; left: 19px; top: 0; width: 16px; height: 10px; border: solid #c0c0c0; border-width: 0 0 1px 1px; }
.top .code.b { padding-left: 30px; }
.b::before { content: ""; position: absolute; left: 9px; top: 0; width: 4px; height: 63px; border: solid #c0c0c0; border-width: 0 0 1px 1px; }
.b::after { content: ""; position: absolute; left: 19px; top: 68px; bottom: 0; border-left: 1px solid #c0c0c0; }
.top .big td { padding-top: 18px; }
.pm { position: absolute; left: 3px; top: 3px; width: 13px; height: 13px; border: 1px solid #bbb; background: linear-gradient(#000, #000) center / 7px 1px no-repeat, linear-gradient(#000, #000) center / 1px 7px no-repeat, #fff; }
.pm.minus { left: 13px; top: 56px; background: linear-gradient(#000, #000) center / 7px 1px no-repeat, #fff; }
.top .vs .thumb { height: 17px; margin-top: 78px; }
.top .vs button:last-child { margin: auto 0 18px; }

.lower { flex: 1; min-height: 0; display: flex; }
.detail { flex: 1; min-width: 0; display: flex; flex-direction: column; padding-top: 6px; }
.dtabs { height: 22px; flex: none; display: flex; margin-bottom: 1px; font-family: "Noto Sans CJK SC", sans-serif; }
.dtabs button { padding: 0 10px 0 11px; margin-top: 1px; border-left: 1px solid #999; height: 20px; }
.dtabs .press { padding: 0 4px 0 5px; margin: 0 3px 0 1px; border: solid #888; border-width: 2px 1px 1px 2px; border-right-color: #fff; border-bottom-color: #fff; background: #fafafa; }
.bottom { flex: 1; min-height: 0; border-top-width: 1px; }
.bottom .hs { margin-top: auto; }
.rc { position: relative; padding-left: 20px; }
.nm { position: relative; }
.more { position: absolute; right: 1px; top: 2px; width: 15px; height: 15px; border: 1px solid #aaa; background: #e4e4e4; }
.more svg { width: 13px; height: 13px; display: block; }
.ops { width: 128px; flex: none; padding: 35px 15px 0 11px; display: flex; flex-direction: column; gap: 5px; color: #8a8a8a; }
.ops button { height: 24px; border: 2px solid #bebebe; background: #ccc; flex: none; }
.pair { display: flex; gap: 6px; justify-content: flex-end; }
.pair button { width: 48px; }
.ops fieldset { margin: 1px -8px 0 0; padding: 4px 0 0; height: 96px; min-width: 0; border: 1px solid #dcdcdc; color: #000; display: flex; flex-direction: column; gap: 8px; }
.ops legend { margin-left: 1px; padding: 0 2px; }
.ops label { display: flex; align-items: center; gap: 3px; padding-left: 63px; height: 16px; }
.ops input, .scopes input { appearance: none; width: 13px; height: 13px; border: 1px solid #444; border-radius: 50%; background: #fff; margin: 0; flex: none; }
.ops input:checked, .scopes input:checked { background: radial-gradient(circle, #222 3px, #fff 4px); }

.status { height: 22px; flex: none; display: grid; grid-template-columns: 383px 384px 232px 177px 1fr; gap: 0; padding-top: 2px; font-family: "Noto Sans CJK SC", sans-serif; }
.status > span { border: 1px solid #d0d0d0; margin-right: 2px; padding-left: 1px; line-height: 18px; overflow: hidden; white-space: nowrap; background: linear-gradient(#fafafa, #f0f0f0); }

.task { height: 40px; flex: none; background: #020b0d; color: #fff; display: flex; }
.start { width: 48px; display: grid; place-items: center; background: #000; }
.start svg { width: 17px; height: 17px; }
.search { width: 342px; flex: none; background: #333; display: flex; align-items: center; padding: 0 12px 0 8px; }
.ring { width: 24px; height: 24px; margin-right: 4px; }
.search input { flex: 1; min-width: 0; border: 0; background: none; padding: 0; font: 14px "Noto Sans CJK SC", sans-serif; color: #fff; }
.search input::placeholder { color: #a0a0a0; opacity: 1; }
.mic { width: 12px; height: 20px; }
.apps { display: flex; padding-left: 4px; }
.apps button { width: 49px; display: grid; place-items: center; border-bottom: 3px solid transparent; }
.apps button:nth-child(3) { margin-left: 5px; }
.apps svg { width: 24px; height: 24px; margin-top: 2px; }
.apps .run { background: linear-gradient(#76b9ed, #76b9ed) center bottom / 41px 3px no-repeat; background-origin: border-box; }
.apps .cur { background: #333d40; border-bottom-color: #76b9ed; }
.tray { margin-left: auto; display: flex; align-items: center; padding-right: 15px; }
.cpu { width: 56px; text-align: center; line-height: 17px; margin-right: 15px; }
.t1 { width: 12px; height: 8px; margin-right: 12px; }
.t2 { width: 15px; height: 14px; margin-right: 9px; }
.t3 { width: 24px; height: 14px; margin-right: 9px; }
.ying { font-size: 13px; margin-right: 14px; }
.sg { width: 16px; height: 16px; margin-right: 14px; }
.clock { width: 64px; text-align: center; line-height: 18px; margin-right: 15px; }
.note { width: 28px; height: 32px; }

.dialog { position: absolute; left: 568px; top: 100px; width: 726px; height: 496px; border: 1px solid #3f8fdf; background: #f0f0f0; box-shadow: 0 4px 12px rgba(0, 0, 0, .3); display: flex; flex-direction: column; font-family: "Noto Sans CJK SC", sans-serif; }
.dialog > header { height: 30px; flex: none; background: #fff; display: flex; align-items: center; padding-left: 8px; gap: 5px; }
.dialog h2 { flex: 1; }
.dialog .winbtns svg { stroke: #000; }
.dialog .winbtns .off svg { stroke: #ccc; }
.dialog .dtabs { padding: 1px 0 0 2px; height: 22px; margin-bottom: 2px; }
.dialog .dtabs .press { margin-right: 5px; padding: 0 3px; }
.dialog .dtabs i { width: 1px; height: 20px; background: #999; }
.panes { flex: 1; min-height: 0; display: flex; gap: 4px; padding: 0 8px 0 8px; }
.left { width: 215px; flex: none; display: flex; flex-direction: column; }
.lib { position: relative; height: 21px; width: 216px; }
.lib select { appearance: none; width: 100%; height: 21px; padding: 0 20px 0 3px; border: 1px solid #adadad; border-radius: 0; background: #e3e3e3; font: inherit; color: #000; }
.lib .chev { position: absolute; right: 4px; top: 6px; stroke-width: 1.3; }
.ltabs { display: flex; height: 21px; flex: none; padding-top: 1px; align-items: flex-end; }
.ltabs button { height: 18px; width: 56px; border: 1px solid #dcdcdc; border-bottom: 0; background: #f0f0f0; }
.ltabs .cur { height: 20px; width: 64px; background: #fff; }
.panel { flex: 1; min-height: 0; border: 1px solid #dcdcdc; background: #fff; padding: 4px 2px 2px 3px; display: flex; flex-direction: column; }
.tree { flex: 1; min-height: 0; border: 1px solid #828790; padding: 1px; display: flex; flex-direction: column; }
.view { flex: 1; min-height: 0; display: flex; }
.view ul { flex: 1; min-width: 0; overflow: hidden; padding-left: 3px; }
.view li { display: flex; height: 16px; line-height: 16px; white-space: nowrap; }
.view li span { padding: 0 2px; }
.view li i { width: 19px; flex: none; position: relative; }
.view li i .chev { margin: 3px 0 0 4px; }
.v::before, .e::before { content: ""; position: absolute; left: 9px; top: 0; bottom: 0; border-left: 1px dotted #777; }
.e.last::before { bottom: 8px; }
.e::after { content: ""; position: absolute; left: 10px; right: 0; top: 7px; border-top: 1px dotted #777; }
.view .vs .thumb { height: 87px; margin-top: 5px; }
.tree .wide { width: 123px; }
.box .wide { width: 84px; }
.scopes { height: 37px; flex: none; background: #f0f0f0; display: flex; align-items: center; padding-left: 11px; gap: 16px; }
.scopes label { display: flex; align-items: center; gap: 9px; width: 48px; white-space: nowrap; }
.scopes input { width: 11px; height: 11px; border-color: #999; }
.mats { flex: 1; min-width: 0; }
.mats th { height: 22px; }
.mats .hs { margin-top: auto; }
.mats th.cut { text-align: left; padding-left: 9px; border-right: 0; }
.mats .price { text-align: right; border-right: 0; padding-right: 4px; }
.mats .price.edge { padding-right: 1px; }
.acts { height: 42px; flex: none; display: flex; justify-content: flex-end; align-items: flex-start; gap: 9px; padding: 10px 9px 0 0; }
.acts button { width: 74px; height: 24px; border: 1px solid #adadad; background: #e1e1e1; }
.acts .def { border: 2px solid #0078d7; }

.float { position: absolute; left: 869px; top: 12px; width: 130px; height: 50px; }
.pill { position: absolute; left: 26px; right: 1px; top: 7px; height: 39px; border: 1px solid #aaa; border-radius: 20px; background: linear-gradient(#fff, #ddd); box-shadow: 0 2px 4px rgba(0, 0, 0, .3); display: flex; align-items: center; justify-content: flex-end; padding-right: 4px; }
.pill svg { width: 20px; height: 20px; margin-left: 4px; }
.rates { width: 46px; font-size: 10px; line-height: 15px; }
.rates p { display: flex; justify-content: space-between; }
.red { color: #e8553a; } .green { color: #2a9a4a; }
.ball { position: absolute; left: 0; top: 0; width: 51px; height: 51px; border: 2px solid #fff; outline: 1px solid #888; outline-offset: -1px; border-radius: 50%; background: linear-gradient(#12805a 0 20%, #3fc45b 22%, #4fd261); color: #fff; text-align: center; font: 14px/46px "Open Sans", sans-serif; }
.ime { position: absolute; left: 1182px; right: 0; bottom: 40px; height: 25px; background: linear-gradient(90deg, transparent 20px, #f7faff 20px); border: 1px solid #a9c4e4; border-left: 0; display: flex; align-items: center; justify-content: space-between; padding-right: 4px; color: #1f78d1; font: bold 14px "Noto Sans CJK SC", sans-serif; }
.ime svg { width: 16px; height: 16px; flex: none; }
.ime .logo { width: 28px; height: 28px; }
.marks { position: absolute; inset: 0; width: 1366px; height: 768px; pointer-events: none; }
</style>
